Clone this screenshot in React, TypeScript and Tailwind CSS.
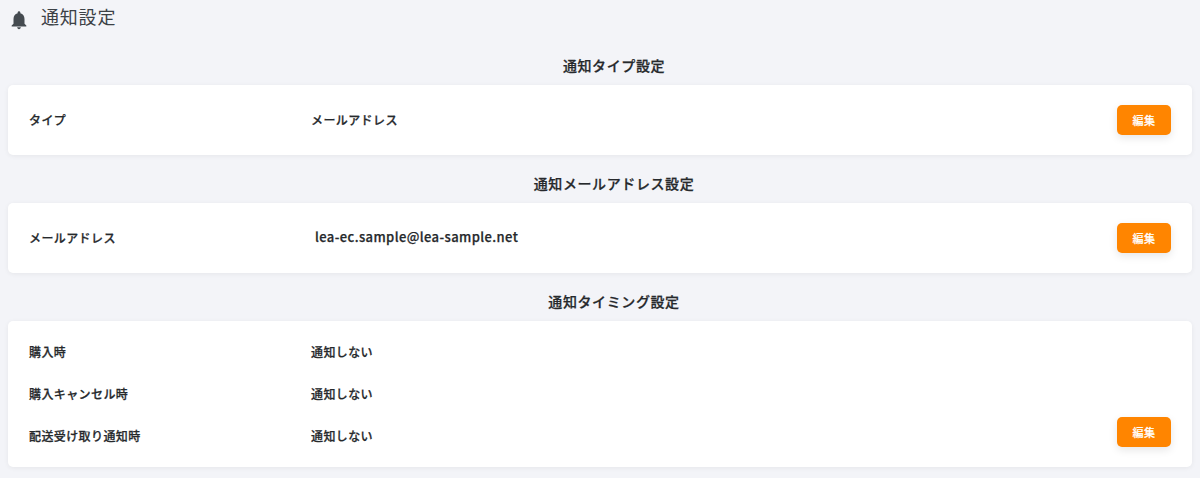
import React from "react";

function Bell() {
  return (
    <svg viewBox="0 0 24 24" className="w-[22px] h-[22px] fill-[#444a50] shrink-0 mt-[4px]">
      <path d="M12 22c1.1 0 2-.9 2-2h-4c0 1.1.9 2 2 2zm6-6v-5c0-3.07-1.63-5.64-4.5-6.32V4c0-.83-.67-1.5-1.5-1.5s-1.5.67-1.5 1.5v.68C7.64 5.36 6 7.92 6 11v5l-2 2v1h16v-1l-2-2z" />
    </svg>
  );
}

function EditButton() {
  return (
    <button className="w-[54px] h-[30px] rounded-[5px] bg-[#ff8500] text-white text-[11px] font-medium tracking-[0.5px] [-webkit-text-stroke:0.2px] shadow-[0_3px_8px_rgba(0,0,0,0.1)] flex items-center justify-center">
      編集
    </button>
  );
}

function Heading({ children, className }: { children: React.ReactNode; className: string }) {
  return (
    <h2 className={`text-center pl-[28px] text-[14px] font-medium tracking-[0.6px] [-webkit-text-stroke:0.25px] leading-[20px] text-[#26292c] ${className}`}>
      {children}
    </h2>
  );
}

const cardClass =
  "mx-[8px] bg-white rounded-[5px] shadow-[0_1px_5px_rgba(0,0,0,0.06)] pl-[21px] pr-[21px] flex justify-between";

const labelClass = "flex items-center text-[12px] font-medium tracking-[0.4px] [-webkit-text-stroke:0.25px]";

export default function App() {
  return (
    <div className="w-[1200px] h-[478px] overflow-hidden bg-[#f3f4f8] font-['Noto_Sans_CJK_JP','Noto_Sans',sans-serif] text-[#26292c]">
      <div className="flex items-center h-[36px] pl-[7.5px]">
        <Bell />
        <span className="ml-[11.5px] -mt-[4px] text-[18px] leading-[36px] tracking-[0.8px] text-[#3c4146]">通知設定</span>
      </div>

      <Heading className="mt-[19px] mb-[10px]">通知タイプ設定</Heading>
      <div className={`${cardClass} h-[70px] items-center`}>
        <div className={labelClass}>
          <span className="w-[282px]">タイプ</span>
          <span>メールアドレス</span>
        </div>
        <EditButton />
      </div>

      <Heading className="mt-[18px] mb-[10px]">通知メールアドレス設定</Heading>
      <div className={`${cardClass} h-[70px] items-center`}>
        <div className={labelClass}>
          <span className="w-[286px]">メールアドレス</span>
          <span className="text-[13px] tracking-[0.4px] -mt-[3px]">lea-ec.sample@lea-sample.net</span>
        </div>
        <EditButton />
      </div>

      <Heading className="mt-[18px] mb-[10px]">通知タイミング設定</Heading>
      <div className={`${cardClass} h-[146px] items-end pb-[20px]`}>
        <div className="flex flex-col gap-[24px] pb-[2px]">
          <div className={`${labelClass} h-[18px]`}>
            <span className="w-[282px]">購入時</span>
            <span>通知しない</span>
          </div>
          <div className={`${labelClass} h-[18px]`}>
            <span className="w-[282px]">購入キャンセル時</span>
            <span>通知しない</span>
          </div>
          <div className={`${labelClass} h-[18px]`}>
            <span className="w-[282px]">配送受け取り通知時</span>
            <span>通知しない</span>
          </div>
        </div>
        <EditButton />
      </div>
    </div>
  );
}
